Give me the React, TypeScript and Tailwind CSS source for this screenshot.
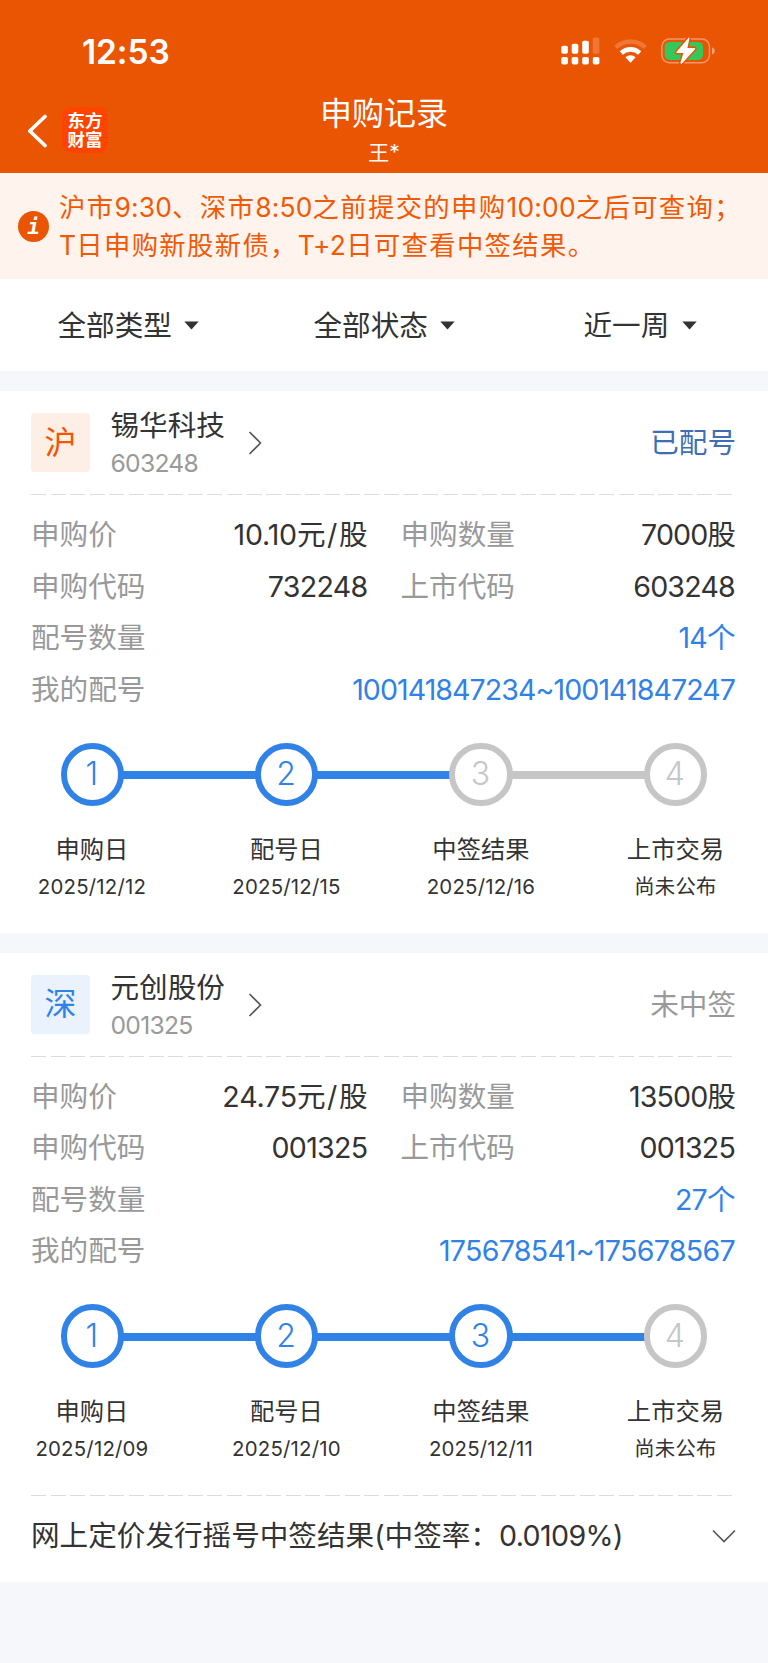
import React from "react";

type Step = { label: string; date: string; done: boolean };

type Subscription = {
  market: string;
  marketClass: string;
  name: string;
  code: string;
  status: string;
  statusClass: string;
  price: string;
  amount: string;
  applyCode: string;
  listCode: string;
  count: string;
  numbers: string;
  numbersClass: string;
  steps: Step[];
};

const records: Subscription[] = [
  {
    market: "沪",
    marketClass: "bg-[#fdeee6] text-[#f35500]",
    name: "锡华科技",
    code: "603248",
    status: "已配号",
    statusClass: "text-[#3e6eb4]",
    price: "10.10元/股",
    amount: "7000股",
    applyCode: "732248",
    listCode: "603248",
    count: "14个",
    numbers: "100141847234~100141847247",
    numbersClass: "tracking-[-0.95px] text-[#3182e6]",
    steps: [
      { label: "申购日", date: "2025/12/12", done: true },
      { label: "配号日", date: "2025/12/15", done: true },
      { label: "中签结果", date: "2025/12/16", done: false },
      { label: "上市交易", date: "尚未公布", done: false },
    ],
  },
  {
    market: "深",
    marketClass: "bg-[#eaf2fd] text-[#3182e6]",
    name: "元创股份",
    code: "001325",
    status: "未中签",
    statusClass: "text-[#999999]",
    price: "24.75元/股",
    amount: "13500股",
    applyCode: "001325",
    listCode: "001325",
    count: "27个",
    numbers: "175678541~175678567",
    numbersClass: "tracking-[-0.7px] text-[#3182e6]",
    steps: [
      { label: "申购日", date: "2025/12/09", done: true },
      { label: "配号日", date: "2025/12/10", done: true },
      { label: "中签结果", date: "2025/12/11", done: true },
      { label: "上市交易", date: "尚未公布", done: false },
    ],
  },
];

function StatusBar() {
  return (
    <div className="flex h-[100px] items-center pt-[3px] pl-[82px] text-white">
      <span className="w-[479.4px] text-[33.5px] leading-[40px] font-semibold tracking-[-0.1px]">12:53</span>
      <svg className="mr-[14px] mb-[1px]" width="39" height="28" viewBox="0 0 39 28" fill="white">
        <rect x="0.3" y="8.8" width="6.6" height="8" rx="1.8" />
        <rect x="10.7" y="6.8" width="6.6" height="10" rx="1.8" />
        <rect x="21.2" y="3.8" width="6.6" height="13" rx="1.8" />
        <rect x="31.8" y="0.6" width="6.6" height="16.2" rx="1.8" opacity="0.2" />
        <rect x="0.3" y="20" width="6.6" height="7.6" rx="1.8" />
        <rect x="10.7" y="20" width="6.6" height="7.6" rx="1.8" />
        <rect x="21.2" y="20" width="6.6" height="7.6" rx="1.8" />
        <rect x="31.8" y="20" width="6.6" height="7.6" rx="1.8" />
      </svg>
      <svg className="mr-[14px] mb-[1px]" width="33" height="26" viewBox="0 0 33 26" fill="none">
        <path d="M1.8 9.4 A21.3 21.3 0 0 1 31.2 9.4" stroke="white" strokeWidth="4.6" opacity="0.2" />
        <path d="M7.3 15 A13.4 13.4 0 0 1 25.7 15" stroke="white" strokeWidth="4.6" />
        <path d="M11.4 19.2 A7.4 7.4 0 0 1 21.6 19.2 L17.1 24.3 Q16.5 24.9 15.9 24.3 Z" fill="white" />
      </svg>
      <svg className="mb-[1px]" width="55" height="28" viewBox="0 0 55 28" fill="none">
        <rect x="0.9" y="2" width="47.6" height="23.8" rx="7.6" stroke="white" strokeWidth="1.5" opacity="0.4" />
        <path d="M51 10.2 Q53.8 11.2 53.8 14 Q53.8 16.8 51 17.8 Z" fill="white" opacity="0.45" />
        <rect x="3.7" y="4.9" width="38.3" height="18" rx="5" fill="#34c759" />
        <path
          d="M28.6 0.8 Q28.4 0 27.6 0.8 L15.4 15 Q14.8 16.1 16 16.1 H22.4 L19.4 25.6 Q19.5 27.6 21 26.4 L34 12.2 Q34.6 11.2 33.4 11.1 H26.4 Z"
          fill="white"
          stroke="#ea5504"
          strokeWidth="3"
          strokeLinejoin="round"
          paintOrder="stroke"
        />
      </svg>
    </div>
  );
}

function NavBar() {
  return (
    <div className="grid h-[73.3px] grid-cols-[200px_1fr_200px] text-white">
      <div className="flex items-start pt-[7px] pl-[27px]">
        <svg className="mt-[7px] mr-[15px]" width="20" height="34" viewBox="0 0 20 34" fill="none">
          <path
            d="M18 2.5 L2.8 17 L18 31.5"
            stroke="white"
            strokeWidth="3.7"
            strokeLinecap="round"
            strokeLinejoin="round"
          />
        </svg>
        <div className="flex h-[46px] w-[46px] flex-col items-center justify-center rounded-[9px] bg-[#ff4400] text-[17.5px] leading-[19.5px] font-bold">
          <span>东方</span>
          <span>财富</span>
        </div>
      </div>
      <div className="flex flex-col items-center">
        <h1 className="mt-[-6px] text-[32px] leading-[40px]">申购记录</h1>
        <p className="mt-[6px] text-[21px] leading-[26px]">王*</p>
      </div>
    </div>
  );
}

/* Chinese text is set wide; digits and Latin letters inside it keep a tighter tracking. */
function Mixed({ text }: { text: string }) {
  return (
    <>
      {text.split(/([0-9A-Z:+]+)/).map((run, i) => (
        <span key={i} className={i % 2 ? "tracking-[0.2px]" : "tracking-[1.3px]"}>
          {run}
        </span>
      ))}
    </>
  );
}

function Notice() {
  return (
    <div className="flex h-[105.7px] border-t border-[#fff9f5] bg-[#fff3ee] pl-[18px] text-[#f05a05]">
      <span className="mt-[37px] flex h-[31px] w-[31px] shrink-0 items-center justify-center rounded-full bg-[#ea5504] pt-px font-['DejaVu_Sans_Mono'] text-[21px] leading-none font-bold text-white italic">
        i
      </span>
      <div className="mt-[15px] ml-[10px] text-[26.4px] leading-[37.5px] whitespace-nowrap">
        <p>
          <Mixed text="沪市9:30、深市8:50之前提交的申购10:00之后可查询；" />
        </p>
        <p>
          <Mixed text="T日申购新股新债，T+2日可查看中签结果。" />
        </p>
      </div>
    </div>
  );
}

function Filter({ text }: { text: string }) {
  return (
    <button className="flex items-center gap-[12.5px] text-[28.6px] leading-[40px]">
      {text}
      <svg width="15" height="9" viewBox="0 0 15 9">
        <path d="M0.3 0.5 H14.7 L7.5 8.5 Z" fill="#333333" />
      </svg>
    </button>
  );
}

function Dashes() {
  return (
    <div className="h-px w-[702px] bg-[repeating-linear-gradient(90deg,#dcdcdc_0,#dcdcdc_15px,transparent_15px,transparent_19.6px)]" />
  );
}

function Pair({ label, value, valueClass }: { label: string; value: string; valueClass: string }) {
  return (
    <div className="flex justify-between whitespace-nowrap">
      <span className="text-[#999999]">{label}</span>
      <span className={valueClass}>{value}</span>
    </div>
  );
}

function Price({ text }: { text: string }) {
  const [amount, unit] = text.split("元/");
  return (
    <div className="flex justify-between whitespace-nowrap">
      <span className="text-[#999999]">申购价</span>
      <span>
        <span className="tracking-[-0.2px]">{amount}</span>元<span className="mx-[1.5px]">/</span>
        {unit}
      </span>
    </div>
  );
}

function Steps({ steps }: { steps: Step[] }) {
  return (
    <div>
      <div className="flex items-center pl-[60.5px]">
        {steps.map((s, i) => (
          <React.Fragment key={s.label}>
            {i > 0 && (
              <div
                className={`mx-[-1px] mt-[1px] h-[8px] w-[132.9px] ${steps[i - 1].done ? "bg-[#3182e6]" : "bg-[#c6c6c6]"}`}
              />
            )}
            <div
              className={`flex h-[63.5px] w-[63.5px] items-center justify-center rounded-full border-[6px] pr-[1px] text-[32px] leading-none font-light ${
                s.done ? "border-[#3182e6] text-[#3182e6]" : "border-[#c6c6c6] text-[#c6c6c6]"
              }`}
            >
              {i + 1}
            </div>
          </React.Fragment>
        ))}
      </div>
      <div className="mt-[25.7px] ml-[-5.3px] grid w-[778px] grid-cols-4">
        {steps.map((s) => (
          <div key={s.label} className="flex flex-col items-center">
            <span className="text-[24.3px] leading-[34px]">{s.label}</span>
            <span className="mt-[6px] text-[20.4px] leading-[30px] tracking-[0.2px]">{s.date}</span>
          </div>
        ))}
      </div>
    </div>
  );
}

function Card({ r, children }: { r: Subscription; children?: React.ReactNode }) {
  return (
    <section className="bg-white">
      <div className="flex h-[103px] pt-[21.5px] pr-[32px] pl-[31px]">
        <div className={`flex h-[59.5px] w-[59px] items-center justify-center rounded-[4px] text-[32px] ${r.marketClass}`}>
          {r.market}
        </div>
        <div className="mt-[-4px] ml-[20.5px] flex flex-col">
          <span className="text-[28.6px] leading-[34px]">{r.name}</span>
          <span className="mt-[5px] text-[24.7px] leading-[30px] tracking-[-0.75px] text-[#999999]">{r.code}</span>
        </div>
        <svg className="mt-[18px] ml-[23px]" width="15" height="24" viewBox="0 0 15 24" fill="none">
          <path d="M1.5 1 L12.5 12 L1.5 23" stroke="#555555" strokeWidth="1.6" />
        </svg>
        <span className={`mt-[10px] ml-auto text-[28.6px] leading-[40px] ${r.statusClass}`}>{r.status}</span>
      </div>
      <div className="pl-[31px]">
        <Dashes />
      </div>
      <div className="grid grid-cols-[336.5px_334.5px] gap-x-[33px] pt-[13.6px] pl-[31px] text-[28.6px] leading-[51.6px]">
        <Price text={r.price} />
        <Pair label="申购数量" value={r.amount} valueClass="tracking-[-0.9px]" />
        <Pair label="申购代码" value={r.applyCode} valueClass="tracking-[-0.7px]" />
        <Pair label="上市代码" value={r.listCode} valueClass="tracking-[-0.8px]" />
        <div className="col-span-2">
          <Pair label="配号数量" value={r.count} valueClass="tracking-[-0.7px] text-[#3182e6]" />
          <Pair label="我的配号" value={r.numbers} valueClass={r.numbersClass} />
        </div>
      </div>
      <div className="pt-[27.4px]">
        <Steps steps={r.steps} />
      </div>
      {children}
    </section>
  );
}

export default function App() {
  return (
    <main className="min-h-[1663px] w-[768px] overflow-hidden bg-[#f5f7fa] font-['Inter','Noto_Sans_CJK_SC',sans-serif] font-normal text-[#333333]">
      <header className="bg-[#ea5504]">
        <StatusBar />
        <NavBar />
      </header>
      <Notice />
      <nav className="flex h-[92px] items-center bg-white pt-[2px] pl-[57.5px]">
        <div className="w-[256px]">
          <Filter text="全部类型" />
        </div>
        <div className="w-[270px]">
          <Filter text="全部状态" />
        </div>
        <Filter text="近一周" />
      </nav>
      <div className="h-[20.4px]" />
      <Card r={records[0]}>
        <div className="h-[30.6px]" />
      </Card>
      <div className="h-[20.6px]" />
      <Card r={records[1]}>
        <div className="pt-[31px] pl-[31px]">
          <Dashes />
        </div>
        <div className="flex h-[86.4px] items-center justify-between pr-[32px] pb-[4px] pl-[31px] text-[28.6px] whitespace-nowrap">
          <span>
            网上定价发行摇号中签结果(中签率：<span className="tracking-[-0.6px]">0.0109%)</span>
          </span>
          <svg width="24" height="15" viewBox="0 0 24 15" fill="none">
            <path d="M1 1.5 L12 12.5 L23 1.5" stroke="#555555" strokeWidth="1.6" />
          </svg>
        </div>
      </Card>
    </main>
  );
}
